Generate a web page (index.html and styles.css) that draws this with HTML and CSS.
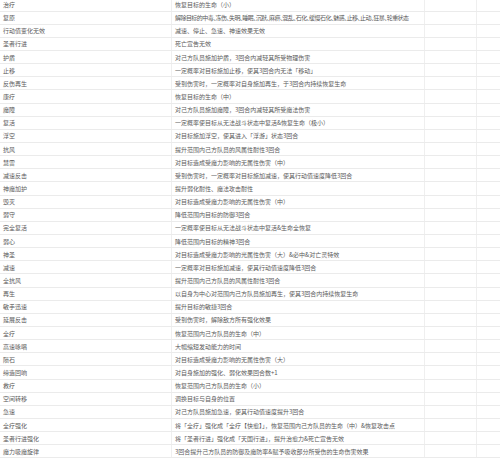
FILE: index.html
```html
<!DOCTYPE html>
<html lang="zh-CN">
<head>
<meta charset="utf-8">
<link rel="stylesheet" href="styles.css">
</head>
<body>
<div class="table">
  <div class="row"><div class="c name">治疗</div><div class="c desc">恢复目标的生命（小）</div><div class="c"></div><div class="c"></div></div>
  <div class="row"><div class="c name">复原</div><div class="c desc tight">解除目标的中毒、冻伤、失明、睡眠、沉默、麻痹、混乱、石化、缓慢石化、魅惑、止移、止动、狂暴、轮重状态</div><div class="c"></div><div class="c"></div></div>
  <div class="row"><div class="c name">行动值变化无效</div><div class="c desc">减速、停止、急速、神速效果无效</div><div class="c"></div><div class="c"></div></div>
  <div class="row"><div class="c name">圣者行进</div><div class="c desc">死亡宣告无效</div><div class="c"></div><div class="c"></div></div>
  <div class="row"><div class="c name">护盾</div><div class="c desc">对己方队员施加护盾，3回合内减轻其所受物理伤害</div><div class="c"></div><div class="c"></div></div>
  <div class="row"><div class="c name">止移</div><div class="c desc">一定概率对目标施加止移，使其3回合内无法「移动」</div><div class="c"></div><div class="c"></div></div>
  <div class="row"><div class="c name">反伤再生</div><div class="c desc">受到伤害时，一定概率对自身施加再生，于3回合内持续恢复生命</div><div class="c"></div><div class="c"></div></div>
  <div class="row"><div class="c name">康疗</div><div class="c desc">恢复目标的生命（中）</div><div class="c"></div><div class="c"></div></div>
  <div class="row"><div class="c name">魔障</div><div class="c desc">对己方队员施加魔障，3回合内减轻其所受魔法伤害</div><div class="c"></div><div class="c"></div></div>
  <div class="row"><div class="c name">复活</div><div class="c desc">一定概率使目标从无法战斗状态中复活&amp;恢复生命（极小）</div><div class="c"></div><div class="c"></div></div>
  <div class="row"><div class="c name">浮空</div><div class="c desc">对目标施加浮空，使其进入「浮游」状态3回合</div><div class="c"></div><div class="c"></div></div>
  <div class="row"><div class="c name">抗风</div><div class="c desc">提升范围内己方队员的风属性耐性3回合</div><div class="c"></div><div class="c"></div></div>
  <div class="row"><div class="c name">慧雷</div><div class="c desc">对目标造成受魔力影响的无属性伤害（中）</div><div class="c"></div><div class="c"></div></div>
  <div class="row"><div class="c name">减速反击</div><div class="c desc">受到伤害时，一定概率对目标施加减速，使其行动值速度降低3回合</div><div class="c"></div><div class="c"></div></div>
  <div class="row"><div class="c name">神魔加护</div><div class="c desc">提升弱化耐性、魔法攻击耐性</div><div class="c"></div><div class="c"></div></div>
  <div class="row"><div class="c name">毁灭</div><div class="c desc">对目标造成受魔力影响的无属性伤害（中）</div><div class="c"></div><div class="c"></div></div>
  <div class="row"><div class="c name">弱守</div><div class="c desc">降低范围内目标的防御3回合</div><div class="c"></div><div class="c"></div></div>
  <div class="row"><div class="c name">完全复活</div><div class="c desc">一定概率使目标从无法战斗状态中复活&amp;生命全恢复</div><div class="c"></div><div class="c"></div></div>
  <div class="row"><div class="c name">弱心</div><div class="c desc">降低范围内目标的精神3回合</div><div class="c"></div><div class="c"></div></div>
  <div class="row"><div class="c name">神圣</div><div class="c desc">对目标造成受魔力影响的光属性伤害（大）&amp;必中&amp;对亡灵特效</div><div class="c"></div><div class="c"></div></div>
  <div class="row"><div class="c name">减速</div><div class="c desc">一定概率对目标施加减速，使其行动值速度降低3回合</div><div class="c"></div><div class="c"></div></div>
  <div class="row"><div class="c name">全抗风</div><div class="c desc">提升范围内己方队员的风属性耐性3回合</div><div class="c"></div><div class="c"></div></div>
  <div class="row"><div class="c name">再生</div><div class="c desc">以自身为中心对范围内己方队员施加再生，使其3回合内持续恢复生命</div><div class="c"></div><div class="c"></div></div>
  <div class="row"><div class="c name">敏手迅速</div><div class="c desc">提升目标的敏捷3回合</div><div class="c"></div><div class="c"></div></div>
  <div class="row"><div class="c name">延展反击</div><div class="c desc">受到伤害时，解除敌方所有强化效果</div><div class="c"></div><div class="c"></div></div>
  <div class="row"><div class="c name">全疗</div><div class="c desc">恢复范围内己方队员的生命（中）</div><div class="c"></div><div class="c"></div></div>
  <div class="row"><div class="c name">高速咏唱</div><div class="c desc">大幅缩短发动能力的时间</div><div class="c"></div><div class="c"></div></div>
  <div class="row"><div class="c name">陨石</div><div class="c desc">对目标造成受魔力影响的无属性伤害（大）</div><div class="c"></div><div class="c"></div></div>
  <div class="row"><div class="c name">缔造回响</div><div class="c desc">对自身施加的强化、弱化效果回合数+1</div><div class="c"></div><div class="c"></div></div>
  <div class="row"><div class="c name">救疗</div><div class="c desc">恢复范围内己方队员的生命（小）</div><div class="c"></div><div class="c"></div></div>
  <div class="row"><div class="c name">空间转移</div><div class="c desc">调换目标与自身的位置</div><div class="c"></div><div class="c"></div></div>
  <div class="row"><div class="c name">急速</div><div class="c desc">对己方队员施加急速，使其行动值速度提升3回合</div><div class="c"></div><div class="c"></div></div>
  <div class="row"><div class="c name">全疗强化</div><div class="c desc">将「全疗」强化成「全疗【快愈】」，恢复范围内己方队员的生命（中）&amp;恢复攻击点</div><div class="c"></div><div class="c"></div></div>
  <div class="row"><div class="c name">圣者行进强化</div><div class="c desc">将「圣者行进」强化成「天国行进」，提升治愈力&amp;死亡宣告无效</div><div class="c"></div><div class="c"></div></div>
  <div class="row"><div class="c name">魔力吸魔旋律</div><div class="c desc">3回合提升己方队员的防御及魔防率&amp;赋予吸收部分所受伤的生命伤害效果</div><div class="c"></div><div class="c"></div></div>
</div>
</body>
</html>
```
FILE: styles.css
```css
html, body {
  margin: 0;
  padding: 0;
  background: #ffffff;
}
body {
  width: 500px;
  height: 458px;
  overflow: hidden;
  font-family: "Noto Sans CJK SC", "Noto Sans", sans-serif;
  font-size: 6px;
  color: #5a5a5a;
}
.table {
  margin-top: -1.5px;
  display: flex;
  flex-direction: column;
}
.row {
  display: grid;
  grid-template-columns: 172px 253px 52px 1fr;
  height: 13.15px;
  border-bottom: 1px solid #ebebeb;
  box-sizing: border-box;
}
.c {
  display: flex;
  align-items: center;
  white-space: nowrap;
  overflow: visible;
  border-right: 1px solid #efefef;
}
.c:last-child {
  border-right: none;
}
.name {
  padding-left: 3px;
}
.desc {
  padding-left: 3px;
}
.tight {
  font-feature-settings: "halt";
  letter-spacing: -0.55px;
}
```
